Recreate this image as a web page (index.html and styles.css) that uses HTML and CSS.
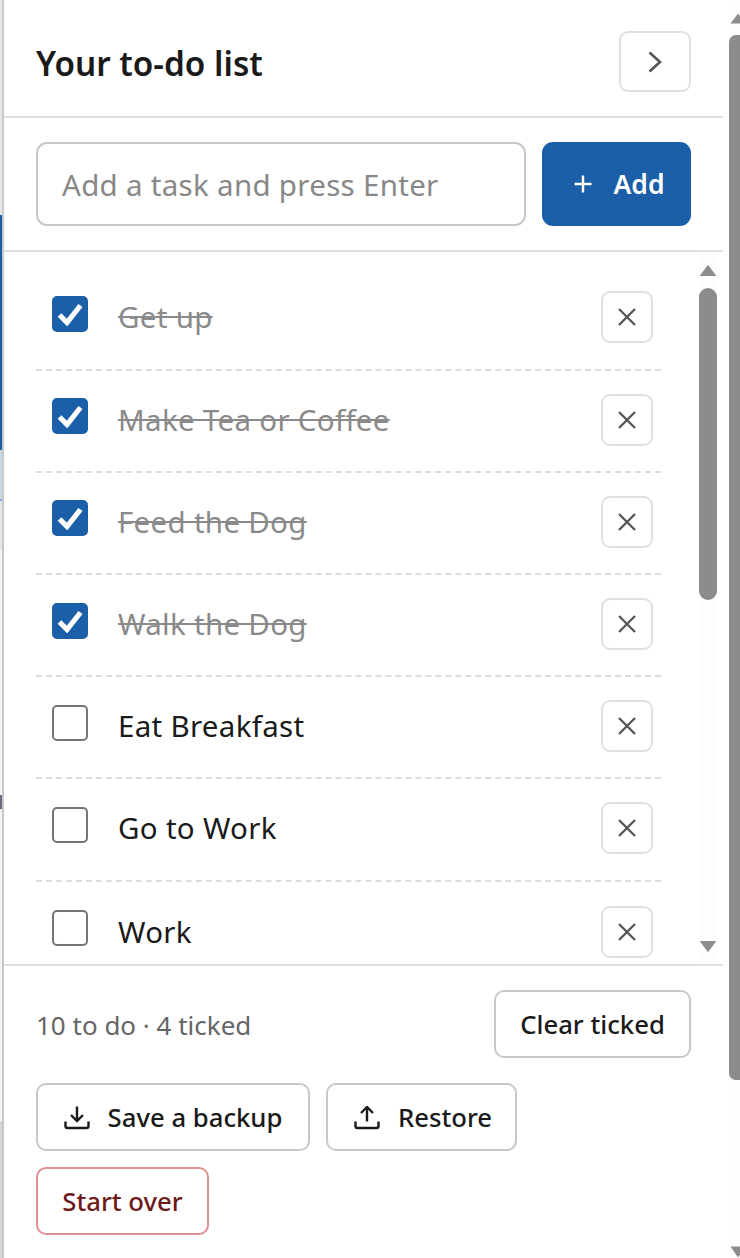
FILE: index.html
```html
<!DOCTYPE html>
<html lang="en">
<head>
<meta charset="utf-8">
<title>Your to-do list</title>
<link rel="stylesheet" href="styles.css">
</head>
<body>
<div class="backdrop">
  <div class="bd bd-top"></div>
  <div class="bd bd-blue"></div>
  <div class="bd bd-pale"></div>
  <div class="bd bd-line"></div>
  <div class="bd bd-grey"></div>
  <div class="bd bd-white"></div>
  <div class="bd bd-glyph"></div>
  <div class="bd bd-white2"></div>
  <div class="bd bd-low"></div>
</div>
<aside class="panel">
  <header class="head">
    <h2 class="title">Your to-do list</h2>
    <button class="btn-collapse" aria-label="Collapse">
      <svg width="16" height="24" viewBox="0 0 16 24"><path d="M2.5 2.5 13 12 2.5 21.5" fill="none" stroke="#555" stroke-width="2.6"/></svg>
    </button>
  </header>
  <form class="add">
    <input class="add-input" type="text" placeholder="Add a task and press Enter">
    <button class="btn-add" type="button">
      <svg width="20" height="20" viewBox="0 0 20 20"><path d="M10 1.5v17M1.5 10h17" fill="none" stroke="#fff" stroke-width="2.4"/></svg>
      <span>Add</span>
    </button>
  </form>
  <div class="list-wrap">
    <ul class="list">
      <li class="row done">
        <span class="check"><svg width="26" height="24" viewBox="0 0 26 24"><path d="M2.5 13 10 20.5 23.5 3.5" fill="none" stroke="#fff" stroke-width="5.2"/></svg></span>
        <span class="label">Get up</span>
        <button class="btn-x" aria-label="Remove"><svg width="20" height="20" viewBox="0 0 20 20"><path d="M2 2l16 16M18 2 2 18" fill="none" stroke="#555" stroke-width="2.3"/></svg></button>
      </li>
      <li class="row done">
        <span class="check"><svg width="26" height="24" viewBox="0 0 26 24"><path d="M2.5 13 10 20.5 23.5 3.5" fill="none" stroke="#fff" stroke-width="5.2"/></svg></span>
        <span class="label">Make Tea or Coffee</span>
        <button class="btn-x" aria-label="Remove"><svg width="20" height="20" viewBox="0 0 20 20"><path d="M2 2l16 16M18 2 2 18" fill="none" stroke="#555" stroke-width="2.3"/></svg></button>
      </li>
      <li class="row done">
        <span class="check"><svg width="26" height="24" viewBox="0 0 26 24"><path d="M2.5 13 10 20.5 23.5 3.5" fill="none" stroke="#fff" stroke-width="5.2"/></svg></span>
        <span class="label">Feed the Dog</span>
        <button class="btn-x" aria-label="Remove"><svg width="20" height="20" viewBox="0 0 20 20"><path d="M2 2l16 16M18 2 2 18" fill="none" stroke="#555" stroke-width="2.3"/></svg></button>
      </li>
      <li class="row done">
        <span class="check"><svg width="26" height="24" viewBox="0 0 26 24"><path d="M2.5 13 10 20.5 23.5 3.5" fill="none" stroke="#fff" stroke-width="5.2"/></svg></span>
        <span class="label">Walk the Dog</span>
        <button class="btn-x" aria-label="Remove"><svg width="20" height="20" viewBox="0 0 20 20"><path d="M2 2l16 16M18 2 2 18" fill="none" stroke="#555" stroke-width="2.3"/></svg></button>
      </li>
      <li class="row">
        <span class="check"></span>
        <span class="label">Eat Breakfast</span>
        <button class="btn-x" aria-label="Remove"><svg width="20" height="20" viewBox="0 0 20 20"><path d="M2 2l16 16M18 2 2 18" fill="none" stroke="#555" stroke-width="2.3"/></svg></button>
      </li>
      <li class="row">
        <span class="check"></span>
        <span class="label">Go to Work</span>
        <button class="btn-x" aria-label="Remove"><svg width="20" height="20" viewBox="0 0 20 20"><path d="M2 2l16 16M18 2 2 18" fill="none" stroke="#555" stroke-width="2.3"/></svg></button>
      </li>
      <li class="row">
        <span class="check"></span>
        <span class="label">Work</span>
        <button class="btn-x" aria-label="Remove"><svg width="20" height="20" viewBox="0 0 20 20"><path d="M2 2l16 16M18 2 2 18" fill="none" stroke="#555" stroke-width="2.3"/></svg></button>
      </li>
    </ul>
    <div class="list-bar">
      <svg class="arrow-up" width="16" height="11" viewBox="0 0 16 11"><path d="M8 0.5 15.5 10.5H0.5Z" fill="#8c8c8c" stroke="#8c8c8c" stroke-linejoin="round"/></svg>
      <div class="list-thumb"></div>
      <svg class="arrow-down" width="16" height="11" viewBox="0 0 16 11"><path d="M8 10.5 15.5 0.5H0.5Z" fill="#8c8c8c" stroke="#8c8c8c" stroke-linejoin="round"/></svg>
    </div>
  </div>
  <footer class="foot">
    <div class="foot-top">
      <span class="status">10 to do · 4 ticked</span>
      <button class="btn btn-clear">Clear ticked</button>
    </div>
    <div class="foot-actions">
      <button class="btn btn-save">
        <svg width="26" height="24" viewBox="0 0 26 24"><path d="M13 1v14M7 9.5l6 6 6-6M1.5 16v4.5a2 2 0 0 0 2 2h19a2 2 0 0 0 2-2V16" fill="none" stroke="#1a1a1a" stroke-width="2.4" transform="translate(0 -0.5)"/></svg>
        <span>Save a backup</span>
      </button>
      <button class="btn btn-restore">
        <svg width="26" height="24" viewBox="0 0 26 24"><path d="M13 16V2M7 7.5l6-6 6 6M1.5 16v4.5a2 2 0 0 0 2 2h19a2 2 0 0 0 2-2V16" fill="none" stroke="#1a1a1a" stroke-width="2.4" transform="translate(0 -0.5)"/></svg>
        <span>Restore</span>
      </button>
    </div>
    <button class="btn btn-danger">Start over</button>
  </footer>
</aside>
<div class="page-bar">
  <svg class="page-up" width="16" height="11" viewBox="0 0 16 11"><path d="M8 0.5 15.5 10.5H0.5Z" fill="#8c8c8c"/></svg>
  <div class="page-thumb"></div>
  <svg class="page-down" width="16" height="12" viewBox="0 0 16 12"><path d="M8 11.5 15.5 0.5H0.5Z" fill="#8c8c8c"/></svg>
</div>
</body>
</html>
```
FILE: styles.css
```css
* { box-sizing: border-box; }
html, body { margin: 0; padding: 0; height: 100%; }
body {
  display: flex;
  width: 740px;
  height: 1258px;
  overflow: hidden;
  background: #fff;
  font-family: "Noto Sans", "Open Sans", sans-serif;
  color: #1a1a1a;
}
button { font-family: inherit; cursor: pointer; background: #fff; padding: 0; }

/* sliver of the page behind the drawer */
.backdrop { width: 2px; flex: none; display: flex; flex-direction: column; }
.bd-top { height: 215px; background: #e6e6e6; }
.bd-blue { height: 235px; background: #1a5fa8; }
.bd-pale { height: 49px; background: #c9d6e4; }
.bd-line { height: 2px; background: #8aa6dc; }
.bd-grey { height: 49px; background: #e2e6ea; }
.bd-white { height: 245px; background: #f4f4f4; }
.bd-glyph { height: 14px; background: #6a6a80; }
.bd-white2 { height: 312px; background: #f4f4f4; }
.bd-low { flex: 1; background: #d6d6d6; }

.panel {
  width: 721px;
  flex: none;
  border-left: 2px solid #c8c8c8;
  height: 100%;
  display: flex;
  flex-direction: column;
  background: #fff;
}

.head {
  height: 118px;
  flex: none;
  border-bottom: 2px solid #e0e0e0;
  padding: 31px 32px 0 32px;
  display: flex;
  justify-content: space-between;
  align-items: flex-start;
}
.title {
  margin: 0;
  font-size: 33.3px;
  line-height: 64px;
  font-weight: 600;
  color: #1a1a1a;
}
.btn-collapse {
  width: 72px;
  height: 61px;
  border: 2px solid #e0e0e0;
  border-radius: 9px;
  display: flex;
  align-items: center;
  justify-content: center;
}

.add {
  height: 134px;
  flex: none;
  margin: 0;
  border-bottom: 2px solid #e0e0e0;
  padding: 24px 32px 0 32px;
  display: flex;
  gap: 16px;
  align-items: flex-start;
}
.add-input {
  flex: 1;
  min-width: 0;
  height: 84px;
  border: 2px solid #c8c8c8;
  border-radius: 11px;
  padding: 0 24px;
  font-family: inherit;
  font-size: 29.5px;
  letter-spacing: 0.3px;
  color: #1a1a1a;
  background: #fff;
  outline: none;
}
.add-input::placeholder { color: #888; opacity: 1; }
.btn-add {
  width: 149px;
  height: 84px;
  flex: none;
  border: 0;
  border-radius: 11px;
  background: #1a5fa8;
  color: #fff;
  font-size: 26.5px;
  font-weight: 600;
  padding-left: 4px;
  display: flex;
  align-items: center;
  justify-content: center;
  gap: 21px;
}

.list-wrap {
  height: 712px;
  flex: none;
  display: flex;
  overflow: hidden;
}
.list {
  list-style: none;
  margin: 0;
  padding: 16.4px 0 0 32px;
  width: 657px;
  flex: none;
}
.row {
  height: 102.2px;
  display: flex;
  align-items: center;
  padding: 0 8px 2px 16px;
  border-bottom: 2px dashed #dcdcdc;
}
.row:last-child { border-bottom: 0; }
.check {
  width: 36px;
  height: 36px;
  flex: none;
  border: 2px solid #757575;
  border-radius: 5px;
  background: #fff;
  display: flex;
  align-items: center;
  justify-content: center;
  margin-top: -7px;
}
.done .check { background: #1a5fa8; border-color: #1a5fa8; }
.label {
  flex: 1;
  margin-left: 30px;
  font-size: 29.5px;
  letter-spacing: 0.3px;
  line-height: 40px;
  color: #1a1a1a;
}
.done .label {
  color: #8a8a8a;
  text-decoration: line-through;
  text-decoration-thickness: 2px;
}
.btn-x {
  width: 52px;
  height: 52px;
  flex: none;
  border: 2px solid #e0e0e0;
  border-radius: 9px;
  display: flex;
  align-items: center;
  justify-content: center;
}

.list-bar {
  width: 18px;
  margin-left: 38px;
  flex: none;
  padding-top: 13px;
  display: flex;
  flex-direction: column;
  align-items: center;
  background: #fdfdfd;
}
.list-thumb { width: 18px; height: 312px; margin-top: 12px; background: #8c8c8c; border-radius: 9px; flex: none; }
.arrow-down { margin-top: 341px; flex: none; }
.arrow-up { flex: none; }

.foot {
  flex: 1;
  border-top: 2px solid #e0e0e0;
  padding: 24px 32px 0 32px;
  display: flex;
  flex-direction: column;
  align-items: flex-start;
}
.foot-top {
  width: 100%;
  height: 68px;
  display: flex;
  justify-content: space-between;
  align-items: center;
}
.status { font-size: 26px; color: #666; padding-top: 2px; }
.btn {
  height: 68px;
  border: 2px solid #c8c8c8;
  border-radius: 10px;
  font-size: 25.7px;
  font-weight: 500;
  color: #1a1a1a;
  padding-top: 1px;
  display: flex;
  align-items: center;
  justify-content: center;
  gap: 18px;
}
.btn-clear { width: 197px; }
.foot-actions { display: flex; gap: 16px; margin-top: 25px; }
.btn-save { width: 274px; }
.btn-restore { width: 191px; padding-left: 3px; }
.btn-danger {
  width: 173px;
  margin-top: 16px;
  border-color: #e09090;
  color: #6e1a1a;
}

.page-bar {
  flex: 1;
  min-width: 0;
  margin-left: 6px;
  display: flex;
  flex-direction: column;
  align-items: flex-start;
  overflow: hidden;
  padding-top: 13px;
  background: #fdfdfd;
}
.page-up, .page-down { flex: none; margin-left: 1px; }
.page-thumb { width: 11px; height: 1045px; margin-top: 11px; background: #8c8c8c; border-radius: 7px 0 0 7px; flex: none; }
.page-down { margin-top: 166px; }
```
